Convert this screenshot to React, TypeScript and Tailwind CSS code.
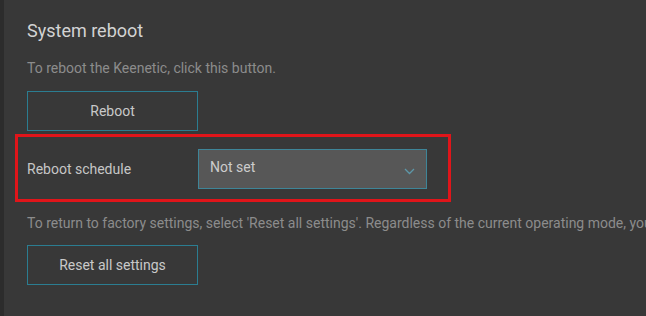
import React from 'react';

const font = { fontFamily: 'Roboto, "Liberation Sans", sans-serif' };

function OutlineButton({ label }: { label: string }) {
  return (
    <button className="w-[171px] h-[40px] border border-[#2b7d91] text-[14px] text-[#c9c9c9] bg-transparent">
      {label}
    </button>
  );
}

export default function App() {
  return (
    <div className="flex w-[646px] h-[316px] overflow-hidden bg-[#383838]" style={font}>
      <div className="w-[4px] shrink-0 bg-[#2c2c2c]" />
      <div className="flex-1 min-w-0 pl-[23px] pt-[19px] flex flex-col">
        <h2 className="text-[18px] leading-[24px] text-[#d3d3d3] whitespace-nowrap">System reboot</h2>
        <p className="mt-[15px] text-[14px] leading-[20px] text-[#8c8c8c] whitespace-nowrap">
          To reboot the Keenetic, click this button.
        </p>
        <div className="mt-[13px]">
          <OutlineButton label="Reboot" />
        </div>

        {/* highlighted row */}
        <div className="mt-[3px] -ml-[12px] w-[436px] h-[68px] border-[3px] border-[#e0151a] flex items-center pl-[9px] pt-[2px]">
          <span className="w-[171px] text-[14px] text-[#c6c6c6]">Reboot schedule</span>
          <div className="w-[229px] h-[40px] bg-[#575757] border border-[#3e8598] flex items-center justify-between pl-[11px] pr-[11px]">
            <span className="text-[14px] text-[#cccccc] pb-[4px]">Not set</span>
            <svg width="11" height="7" viewBox="0 0 11 7" fill="none" className="mt-[4px]">
              <path d="M1 1l4.5 4.5L10 1" stroke="#5d97a8" strokeWidth="1.3" />
            </svg>
          </div>
        </div>

        <p className="mt-[11px] text-[14px] leading-[20px] text-[#8c8c8c] whitespace-nowrap">
          To return to factory settings, select 'Reset all settings'. Regardless of the current operating mode, you
        </p>
        <div className="mt-[12px]">
          <OutlineButton label="Reset all settings" />
        </div>
      </div>
    </div>
  );
}
